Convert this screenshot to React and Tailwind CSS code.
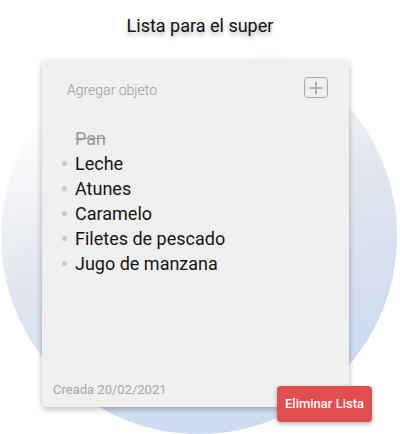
export default function App() {
  const items = [
    { t: "Pan", done: true },
    { t: "Leche" },
    { t: "Atunes" },
    { t: "Caramelo" },
    { t: "Filetes de pescado" },
    { t: "Jugo de manzana" },
  ];
  return (
    <div className="relative w-[400px] h-[434px] overflow-hidden bg-white font-['Roboto',sans-serif]">
      <div className="absolute left-[1px] top-[38px] w-[396px] h-[396px] rounded-full bg-[linear-gradient(162deg,#ffffff_18%,#e2e6ee_48%,#d0dcf1_78%,#cddbf3_100%)]" />
      <div className="relative flex flex-col">
        <h1 className="mt-[14px] text-center text-[18px] leading-[24px] font-normal text-[#111] [text-shadow:0_3px_4px_rgba(0,0,0,0.3)]">
          Lista para el super
        </h1>
        <div className="relative ml-[42px] mt-[23px] w-[307px] h-[346px] flex flex-col rounded-[4px] bg-[#f0f0f0] shadow-[0_2px_6px_rgba(0,0,0,0.28)]">
          <div className="flex justify-between pt-[16px] pl-[25px] pr-[21px]">
            <span className="mt-[3px] text-[14px] leading-[20px] font-light text-[#9a9a9a]">
              Agregar objeto
            </span>
            <div className="w-[24px] h-[21px] rounded-[4px] border-[1.5px] border-[#a8a8a8] flex items-center justify-center">
              <svg width="16" height="16" viewBox="0 0 16 16">
                <path d="M8 1.5v13M1.5 8h13" stroke="#a0a0a0" strokeWidth="1.6" fill="none" />
              </svg>
            </div>
          </div>
          <ul className="mt-[26px] flex flex-col">
            {items.map((it) => (
              <li key={it.t} className="flex items-center h-[25px] pl-[20px]">
                <span
                  className={
                    it.done
                      ? "w-[5px] h-[5px] rounded-full invisible"
                      : "w-[5px] h-[5px] rounded-full bg-[#c8c8c8]"
                  }
                />
                <span
                  className={
                    it.done
                      ? "ml-[8px] text-[18px] leading-[25px] text-[#9a9a9a] line-through"
                      : "ml-[8px] text-[18px] leading-[25px] text-[#151515]"
                  }
                >
                  {it.t}
                </span>
              </li>
            ))}
          </ul>
          <div className="mt-auto pb-[8px] pl-[11px] text-[13px] leading-[18px] text-[#a6a6a6]">
            Creada 20/02/2021
          </div>
          <button className="absolute left-[235px] top-[325px] w-[95px] h-[36px] rounded-[4px] bg-[#e14e4f] text-white text-[13px] font-medium shadow-[0_2px_4px_rgba(0,0,0,0.3)] flex items-center justify-center">
            Eliminar Lista
          </button>
        </div>
      </div>
    </div>
  );
}
